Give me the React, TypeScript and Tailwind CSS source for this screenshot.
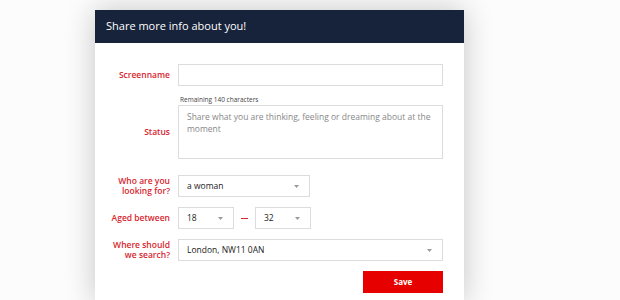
import React from "react";

const Caret = () => (
  <svg width="5" height="3" viewBox="0 0 5 3" className="shrink-0">
    <path d="M0 0 L5 0 L2.5 3 Z" fill="#9a9a9a" />
  </svg>
);

const Select = ({ value, className }: { value: string; className: string }) => (
  <div
    className={`flex items-center justify-between h-[22px] border border-[#dcdcdc] bg-white pl-[8px] pr-[10px] text-[8.5px] text-[#222] ${className}`}
  >
    <span>{value}</span>
    <Caret />
  </div>
);

const Label = ({ children }: { children: React.ReactNode }) => (
  <div className="w-[67px] shrink-0 text-right text-[8.5px] font-semibold leading-[10px] text-[#d8262f]">
    {children}
  </div>
);

export default function App() {
  return (
    <div
      className="relative h-[300px] w-[620px] overflow-hidden bg-[#fcfcfc]"
      style={{ fontFamily: '"Open Sans", "Noto Sans", sans-serif' }}
    >
      <div className="relative ml-[95px] mt-[10px] w-[369px] bg-white shadow-[0_0_28px_rgba(0,0,0,0.22)]">
        <div className="flex h-[33px] items-center bg-[#17233a] px-[11px] text-[11px] text-white">
          Share more info about you!
        </div>
        <div className="flex flex-col pl-[8px] pt-[21px] pb-[10px]">
          <div className="flex items-center gap-[8px]">
            <Label>Screenname</Label>
            <div className="h-[22px] w-[265px] border border-[#dcdcdc] bg-white" />
          </div>
          <div className="mt-[9px] flex gap-[8px]">
            <div className="w-[67px] shrink-0" />
            <div className="ml-[2px] text-[6.5px] leading-[10px] text-[#444]">Remaining 140 characters</div>
          </div>
          <div className="flex items-center gap-[8px]">
            <Label>Status</Label>
            <div className="h-[54px] w-[265px] border border-[#dcdcdc] bg-white px-[8px] pt-[5px] text-[8.5px] leading-[12px] text-[#888]">
              Share what you are thinking, feeling or dreaming about at the moment
            </div>
          </div>
          <div className="mt-[16px] flex items-center gap-[8px]">
            <Label>
              Who are you
              <br />
              looking for?
            </Label>
            <Select value="a woman" className="w-[132px]" />
          </div>
          <div className="mt-[10px] flex items-center gap-[8px]">
            <Label>Aged between</Label>
            <div className="flex items-center">
              <Select value="18" className="w-[56px]" />
              <div className="mx-[7px] h-[1px] w-[7px] bg-[#d8262f]" />
              <Select value="32" className="w-[56px]" />
            </div>
          </div>
          <div className="mt-[10px] flex items-center gap-[8px]">
            <Label>
              Where should
              <br />
              we search?
            </Label>
            <Select value="London, NW11 0AN" className="w-[265px]" />
          </div>
          <div className="mt-[10px] flex gap-[8px]">
            <div className="w-[67px] shrink-0" />
            <div className="flex w-[265px] justify-end">
              <button className="flex h-[22px] w-[80px] items-center justify-center bg-[#e60000] text-[8px] font-bold text-white">
                Save
              </button>
            </div>
          </div>
        </div>
      </div>
    </div>
  );
}
